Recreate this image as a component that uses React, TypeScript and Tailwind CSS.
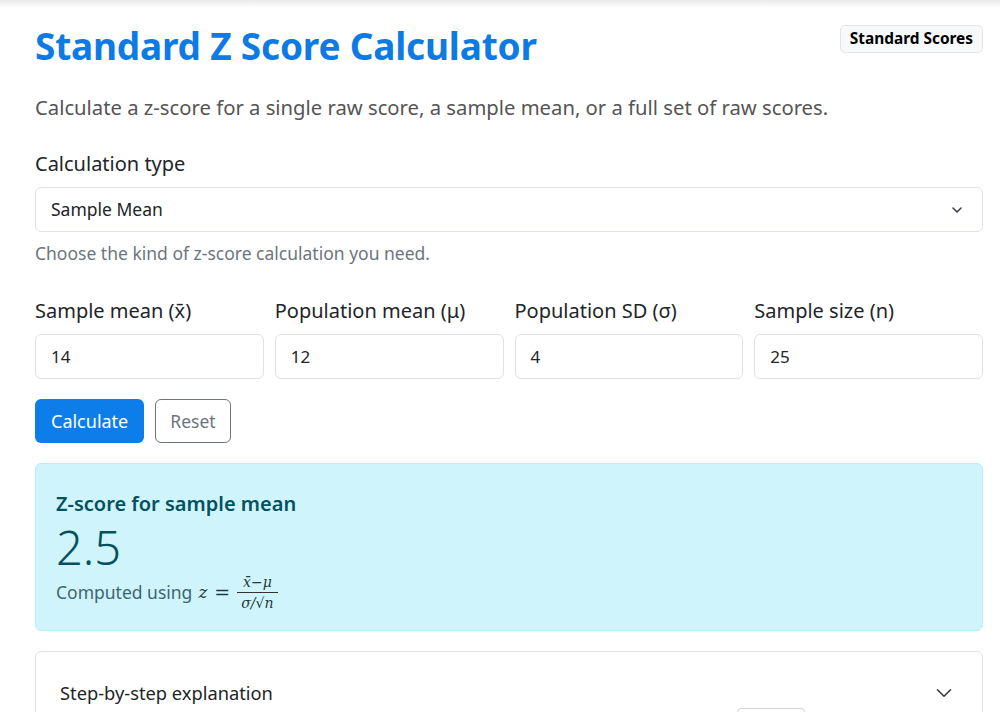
import { ChevronDown } from "lucide-react"

const fields = [
  { label: "Sample mean (x̄)", value: "14" },
  { label: "Population mean (μ)", value: "12" },
  { label: "Population SD (σ)", value: "4" },
  { label: "Sample size (n)", value: "25" },
]

function Formula() {
  return (
    <span className="inline-flex items-center gap-[7px] align-middle text-[#1f3a40] [font-family:'DejaVu_Serif','Liberation_Serif',serif]">
      <span className="italic text-[17px]">z</span>
      <span className="text-[19px] leading-none">=</span>
      <span className="inline-flex flex-col items-center leading-none text-[14px] italic">
        <span className="px-[4px] pb-[3px]">x̄−μ</span>
        <span className="border-t border-[#333] px-[4px] pt-[3px]">σ/√n</span>
      </span>
    </span>
  )
}

export default function App() {
  return (
    <div className="min-h-[712px] bg-white text-[#212529] [font-family:'Noto_Sans','Open_Sans',sans-serif] overflow-hidden relative">
      {/* top shadow */}
      <div className="h-[8px] bg-gradient-to-b from-[#e9e9e9] to-white" />

      <div className="px-[35px] pr-[17px]">
        {/* Header */}
        <div className="flex items-start justify-between pt-[16px]">
          <h1 className="text-[37px] font-bold leading-[44px] text-[#0d7be3] tracking-[-0.2px]">
            Standard Z Score Calculator
          </h1>
          <button className="mt-[1px] h-[28px] px-[9px] rounded-[5px] bg-[#f8f9fa] border border-[#e3e5e8] text-[15.4px] font-bold text-black">
            Standard Scores
          </button>
        </div>

        <p className="mt-[24px] text-[20.25px] leading-[30px] text-[#555]">
          Calculate a z-score for a single raw score, a sample mean, or a full set of raw scores.
        </p>

        {/* Calculation type */}
        <div className="mt-[27px]">
          <label className="block text-[20px] leading-[30px] text-[#212529]">Calculation type</label>
          <div className="mt-[8px] h-[45px] border border-[#dee2e6] rounded-[6px] flex items-center justify-between pl-[15px] pr-[17px]">
            <span className="text-[17.5px] text-[#212529]">Sample Mean</span>
            <ChevronDown className="w-[16px] h-[16px] text-[#343a40]" strokeWidth={2.2} />
          </div>
          <p className="mt-[9px] text-[17.5px] leading-[24px] text-[#6c757d]">
            Choose the kind of z-score calculation you need.
          </p>
        </div>

        {/* Inputs */}
        <div className="mt-[31px] grid grid-cols-4 gap-x-[11px]">
          {fields.map((f) => (
            <div key={f.label}>
              <label className="block text-[20px] leading-[30px] text-[#212529]">{f.label}</label>
              <div className="mt-[8px] h-[45px] border border-[#dee2e6] rounded-[6px] flex items-center pl-[15px] text-[17px]">
                {f.value}
              </div>
            </div>
          ))}
        </div>

        {/* Buttons */}
        <div className="mt-[20px] flex gap-[11px]">
          <button className="h-[44px] px-[16px] rounded-[6px] bg-[#0d7ee9] text-white text-[18px]">
            Calculate
          </button>
          <button className="h-[44px] px-[14px] rounded-[6px] border border-[#6c757d] text-[#6c757d] text-[17.5px]">
            Reset
          </button>
        </div>

        {/* Result */}
        <div className="mt-[20px] h-[168px] rounded-[6px] bg-[#cff4fc] border border-[#b6effb] px-[20px] pt-[26px]">
          <div className="text-[20px] font-semibold leading-[28px] text-[#055160]">Z-score for sample mean</div>
          <div className="text-[47px] font-light leading-[56px] text-[#055160] mt-[1px]">2.5</div>
          <div className="mt-[0px] text-[17.5px] text-[#3d6670] flex items-center gap-[6px]">
            <span>Computed using</span>
            <Formula />
          </div>
        </div>

        {/* Accordion */}
        <div className="mt-[20px] border border-[#dee2e6] rounded-t-[6px] h-[80px] flex items-center justify-between pl-[24px] pr-[25px] pt-[4px]">
          <span className="text-[18.3px] text-[#212529]">Step-by-step explanation</span>
          <ChevronDown className="w-[26px] h-[26px] text-[#343a40]" strokeWidth={1.5} />
        </div>
      </div>

      <div className="absolute left-[737px] top-[708px] w-[68px] h-[10px] border border-[#cfd3d7] rounded-[4px] bg-white" />
    </div>
  )
}
